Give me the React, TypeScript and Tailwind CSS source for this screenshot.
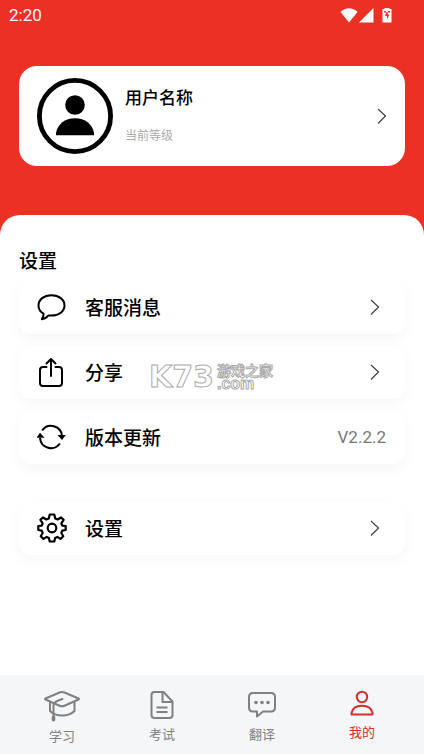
import React, { useState } from 'react';

interface IconProps {
  className?: string;
}

interface SettingItem {
  name: string;
  icon: React.FC<IconProps>;
  value?: string;
}

const ChevronIcon: React.FC = () => (
  <svg className="w-3 h-5 shrink-0" viewBox="0 0 12 20" fill="none" stroke="#3f3f3f" strokeWidth="1.2">
    <path d="M2 3 L9.5 10 L2 17.5" />
  </svg>
);

const AvatarIcon: React.FC<IconProps> = ({ className }) => (
  <svg className={className} viewBox="0 0 76 76">
    <circle cx="38" cy="38" r="35.6" fill="#fff" stroke="#000" strokeWidth="4.8" />
    <circle cx="38" cy="27" r="9.8" />
    <path d="M19 57.3 V55 C20.5 46 28 40.2 38 40.2 S55.5 46 57 55 V57.3 Z" />
  </svg>
);

const ChatIcon: React.FC<IconProps> = ({ className }) => (
  <svg className={className} viewBox="0 0 30 30" fill="none" stroke="#000" strokeWidth="2" strokeLinejoin="round">
    <path d="M14.500 3.200 C22 3.200 27.500 7.600 27.500 13.400 C27.500 19.200 22 23.600 14.500 23.600 C13.500 23.600 12.500 23.500 11.500 23.400 C9.700 25.500 8 27 4.800 27.200 C6.200 25.500 6.600 23.700 6.600 21.600 C3.300 19.700 1.500 16.800 1.500 13.400 C1.500 7.600 7 3.200 14.500 3.200 Z" />
  </svg>
);

const ShareIcon: React.FC<IconProps> = ({ className }) => (
  <svg className={className} viewBox="0 0 30 30" fill="none" stroke="#000" strokeWidth="2" strokeLinecap="round" strokeLinejoin="round">
    <path d="M9.500 10 H6 Q3 10 3 13 V26 Q3 29 6 29 H22 Q25 29 25 26 V13 Q25 10 22 10 H18.500" />
    <path d="M14 19 V2 M9.500 6.500 L14 2 L18.500 6.500" />
  </svg>
);

const RefreshIcon: React.FC<IconProps> = ({ className }) => (
  <svg className={className} viewBox="0 0 30 30" fill="none" stroke="#000" strokeWidth="2">
    <path d="M5.100 8.500 A11 11 0 0 1 25 14" />
    <path d="M3 16 A11 11 0 0 0 22.900 21.500" />
    <path d="M20.500 13 H28.800 L25 18 Z M-0.500 15.800 L3 10.800 L7.500 15.800 Z" fill="#000" stroke="none" />
  </svg>
);

const GearIcon: React.FC<IconProps> = ({ className }) => (
  <svg className={className} viewBox="0 0 30 30" fill="none" stroke="#000" strokeWidth="2.200" strokeLinejoin="round">
    <path d="M12.700 1.500 H17.300 L18.200 5.400 L20.700 6.500 L24.100 4.500 L26.600 6.900 L24.300 10.300 L25.300 12.700 L28.700 13 V17 L25.300 17.600 L24.300 20 L26.300 23.300 L23.500 25.900 L20.300 23.900 L18.100 24.900 L17.300 28.500 H12.700 L11.900 24.900 L9.700 23.900 L6.500 25.900 L3.700 23.300 L5.700 20 L4.700 17.600 L1.300 17 V13 L4.700 12.700 L5.700 10.300 L3.400 6.900 L5.900 4.500 L9.300 6.500 L11.800 5.400 Z" />
    <circle cx="15" cy="15" r="4.300" />
  </svg>
);

const StudyIcon: React.FC = () => (
  <svg className="w-9 h-8" viewBox="0 0 36 32" fill="none" stroke="currentColor" strokeWidth="2" strokeLinecap="round" strokeLinejoin="round">
    <path d="M1.500 9.500 Q0.500 9 1.500 8.500 L15.500 2.500 Q18 1.500 20.500 2.500 L34.500 8.500 Q35.500 9 34.500 9.500 L21 15.500 Q18 17 15 15.500 Z" />
    <path d="M6 12 V21 Q10.500 25.500 18 25.500 Q26 25.500 30.500 21 V12" />
    <path d="M18.500 9 Q9.500 11.500 9.500 15 V25" />
    <path d="M9.500 27 V29.800" strokeWidth="3.600" />
  </svg>
);

const ExamIcon: React.FC = () => (
  <svg className="w-6 h-[30px]" viewBox="0 0 24 30" fill="none" stroke="currentColor" strokeWidth="2" strokeLinejoin="round">
    <path d="M4.500 2 H13.500 L22.500 11.500 V25 Q22.500 28 19.500 28 H4.500 Q1.500 28 1.500 25 V5 Q1.500 2 4.500 2 Z" />
    <path d="M12.500 2 V12 H22.500" />
    <path d="M6.500 17.500 H17.500 M6.500 22 H17.500" />
  </svg>
);

const TranslateIcon: React.FC = () => (
  <svg className="w-7 h-[30px]" viewBox="0 0 28 30" fill="none" stroke="currentColor" strokeWidth="2" strokeLinejoin="round">
    <path d="M5 3 H23 Q27 3 27 7 V17.500 Q27 21.500 23 21.500 H15 L9 26.500 V21.500 H5 Q1 21.500 1 17.500 V7 Q1 3 5 3 Z" />
    <g fill="currentColor" stroke="none">
      <circle cx="8" cy="12.500" r="1.800" />
      <circle cx="14" cy="12.500" r="1.800" />
      <circle cx="20" cy="12.500" r="1.800" />
    </g>
  </svg>
);

const MineIcon: React.FC = () => (
  <svg className="w-6 h-7" viewBox="0 0 24 28" fill="none" stroke="currentColor" strokeWidth="2" strokeLinejoin="round">
    <circle cx="12" cy="7" r="5.200" />
    <path d="M1.500 24.500 V23 C2.500 18 6.500 15.700 12 15.700 S21.500 18 22.500 23 V24.500 Z" />
  </svg>
);

const settings: SettingItem[] = [
  { name: '客服消息', icon: ChatIcon },
  { name: '分享', icon: ShareIcon },
  { name: '版本更新', icon: RefreshIcon, value: 'V2.2.2' },
];

const tabs = [
  { name: '学习', icon: StudyIcon },
  { name: '考试', icon: ExamIcon },
  { name: '翻译', icon: TranslateIcon },
  { name: '我的', icon: MineIcon },
];

const StatusBar: React.FC = () => (
  <div className="flex items-center justify-between h-[30px] pl-[9px] pr-8 text-white">
    <span className="font-[Roboto] text-[17px] leading-5">2:20</span>
    <div className="flex items-center">
      <svg className="w-[18px] h-4" viewBox="0 0 18 16" fill="#fff">
        <path d="M0.500 5 Q9 -2.500 17.500 5 L9 15.500 Z" />
      </svg>
      <svg className="w-4 h-4" viewBox="0 0 16 16" fill="#fff">
        <path d="M15.500 1 V15.500 H1 Z" />
      </svg>
      <svg className="ml-2 w-[10px] h-4" viewBox="0 0 10 16">
        <path d="M2.500 1 H7.500 V2 H9.500 V15.500 H0.500 V2 H2.500 Z" fill="#fff" />
        <path d="M2 4 H4 V5.500 H2 Z M6 4 H8 V5.500 H6 Z M4.500 5 H5.700 V7.500 H7.500 L5 12.500 V9 H3 Z" fill="#ed3024" />
      </svg>
    </div>
  </div>
);

const SettingRow: React.FC<{ item: SettingItem }> = ({ item }) => {
  const Icon = item.icon;
  return (
    <button className="flex items-center w-full h-[53px] pl-[18px] pr-[19px] pb-[2px] bg-white rounded-xl shadow-[0_5px_14px_rgba(0,0,0,0.04)]">
      <Icon className="w-[30px] h-[30px] shrink-0" />
      <span className="ml-[18px] flex-1 text-left text-[19px] leading-7 font-medium">{item.name}</span>
      {item.value ? (
        <span className="font-[Roboto] text-[17px] leading-5 text-[#777]">{item.value}</span>
      ) : (
        <span className="pr-[5px]"><ChevronIcon /></span>
      )}
    </button>
  );
};

const Watermark: React.FC = () => (
  <div className="absolute left-[130px] top-[17px] flex items-start gap-[3px] pointer-events-none text-white font-bold">
    <span className="w-[65px] whitespace-nowrap font-['DejaVu_Sans'] text-[30px] leading-7 [-webkit-text-stroke:1px_#aaa]">K73</span>
    <span className="flex flex-col [-webkit-text-stroke:1px_#aaa]">
      <span className="text-[14px] leading-[14px]">游戏之家</span>
      <span className="font-['Liberation_Sans'] text-[16px] leading-[14px]">.com</span>
    </span>
  </div>
);

const App: React.FC = () => {
  const [activeTab, setActiveTab] = useState('我的');

  return (
    <div className="flex flex-col min-h-screen bg-[#ed3024] font-['Noto_Sans_CJK_SC',sans-serif] text-black">
      <StatusBar />

      {/* Profile */}
      <header className="px-[19px] pt-9 pb-[49px]">
        <button className="flex items-center w-full h-[100px] pl-[18px] pr-[17px] bg-white rounded-[18px]">
          <AvatarIcon className="w-[76px] h-[76px] shrink-0" />
          <span className="ml-3 pb-1 flex-1 flex flex-col gap-[18px] text-left">
            <span className="text-[17px] leading-6 font-medium">用户名称</span>
            <span className="text-xs leading-4 text-[#aaa]">当前等级</span>
          </span>
          <ChevronIcon />
        </button>
      </header>

      {/* Settings */}
      <main className="flex-1 px-[19px] pt-[31px] pb-8 bg-white rounded-t-[20px]">
        <h1 className="text-[19px] leading-7 font-medium">设置</h1>
        <div className="mt-[7px] flex flex-col gap-3">
          {settings.map((item) => (
            <div key={item.name} className="relative">
              <SettingRow item={item} />
              {item.name === '分享' && <Watermark />}
            </div>
          ))}
        </div>
        <div className="mt-[38px]">
          <SettingRow item={{ name: '设置', icon: GearIcon }} />
        </div>
      </main>

      {/* Tab bar */}
      <nav className="grid grid-cols-4 h-[79px] px-3 pt-[15px] bg-[#f5f6f8]">
        {tabs.map(({ name, icon: Icon }) => (
          <button
            key={name}
            onClick={() => setActiveTab(name)}
            className={`flex flex-col items-center justify-start gap-[5px] ${
              activeTab === name ? 'text-[#d03028]' : 'text-[#808080]'
            }`}
          >
            <Icon />
            <span className="text-[13px] leading-[18px]">{name}</span>
          </button>
        ))}
      </nav>
    </div>
  );
};

export default App;
